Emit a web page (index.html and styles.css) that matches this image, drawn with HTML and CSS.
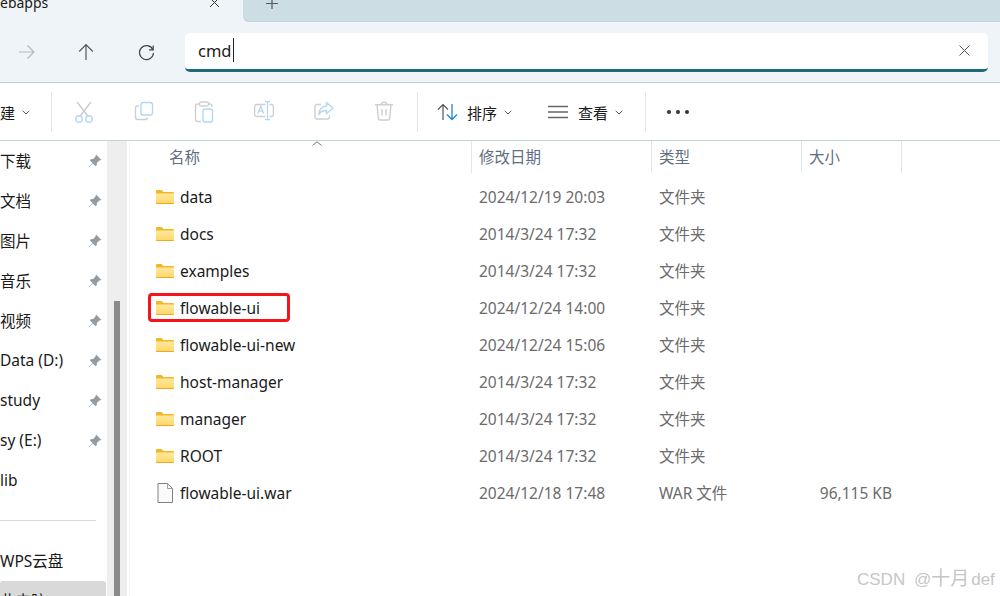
FILE: index.html
```html
<!DOCTYPE html>
<html lang="zh-CN">
<head>
<meta charset="UTF-8">
<meta name="viewport" content="width=device-width, initial-scale=1.0">
<title>webapps</title>
<link rel="stylesheet" href="styles.css">
</head>
<body>
  <svg class="defs" width="0" height="0">
    <defs>
      <linearGradient id="folder-front" x1="0" y1="0" x2="0" y2="1">
        <stop offset="0" stop-color="#ffe99f"/>
        <stop offset="1" stop-color="#ffd565"/>
      </linearGradient>
      <symbol id="folder" viewBox="0 0 18 14">
        <path d="M0 1.2C0 .5.5 0 1.2 0h4.3l2 2H17a1 1 0 0 1 1 1v2H0z" fill="#f5b625"/>
        <path d="M0 3.6h18V13a1 1 0 0 1-1 1H1a1 1 0 0 1-1-1z" fill="url(#folder-front)"/>
        <path d="M0 12.9h18V13a1 1 0 0 1-1 1H1a1 1 0 0 1-1-1z" fill="#eeaa1f"/>
      </symbol>
      <symbol id="pin" viewBox="0 0 14 14">
        <path d="M8.3.8 13.2 5.7 12.2 6.6 11.4 6.4 8.9 8.9 8.8 11.2 7.6 12.3 4.9 9.4 1.2 13 .9 12.7 4.5 9 1.7 6.3 2.8 5.2 5.1 5.1 7.6 2.6 7.4 1.8z" fill="#949ca3"/>
      </symbol>
      <symbol id="chevron" viewBox="0 0 8 5">
        <path d="M.7.8 4 4 7.3.8" fill="none" stroke="#555" stroke-width="1"/>
      </symbol>
    </defs>
  </svg>

  <div class="tabbar">
    <div class="tab">
      <span class="tab-title">ebapps</span>
      <svg class="tab-close" width="12" height="12" viewBox="0 0 12 12"><path d="M1 0 10 9M10 0 1 9" stroke="#333" stroke-width="1" fill="none"/></svg>
    </div>
    <div class="tab-strip">
      <svg width="14" height="14" viewBox="0 0 14 14"><path d="M7 0V9M1 3.500H13" stroke="#555" stroke-width="1.200" fill="none"/></svg>
    </div>
  </div>

  <div class="navbar">
    <div class="nav-btn">
      <svg width="18" height="16" viewBox="0 0 18 16"><path d="M1 8H16M9.500 1.500 16 8l-6.500 6.500" stroke="#b5b9bc" stroke-width="1.200" fill="none"/></svg>
    </div>
    <div class="nav-btn">
      <svg width="16" height="18" viewBox="0 0 16 18"><path d="M8 17V2M1.200 8.500 8 1.700l6.800 6.800" stroke="#555" stroke-width="1.200" fill="none"/></svg>
    </div>
    <div class="nav-btn">
      <svg width="17" height="17" viewBox="0 0 17 17"><path d="M14.800 5.500A7 7 0 1 0 15.500 9M15.200 1.500V5.800H11" stroke="#444" stroke-width="1.200" fill="none"/></svg>
    </div>
    <div class="address">
      <span class="address-text">cmd</span><span class="caret"></span>
      <svg class="address-clear" width="11" height="11" viewBox="0 0 11 11"><path d="M.5.5 10.500 10.500M10.500.5.500 10.500" stroke="#555" stroke-width="1" fill="none"/></svg>
    </div>
  </div>

  <div class="cmdbar">
    <div class="cmd cmd-new">建<svg class="chev" width="8" height="5"><use href="#chevron"/></svg></div>
    <div class="cmd-sep"></div>
    <div class="cmd-group">
      <div class="cmd-icon">
        <svg width="20" height="22" viewBox="0 0 20 22"><path d="M3 1 13.500 14.500M17 1 6.500 14.500" stroke="#c9c9c9" stroke-width="1.300" fill="none"/><circle cx="5" cy="18" r="3.300" stroke="#b3d7f5" stroke-width="1.400" fill="none"/><circle cx="15" cy="18" r="3.300" stroke="#b3d7f5" stroke-width="1.400" fill="none"/></svg>
      </div>
      <div class="cmd-icon">
        <svg width="20" height="20" viewBox="0 0 20 20"><path d="M5 5H3.500A2 2 0 0 0 1.500 7V16.500A2 2 0 0 0 3.500 18.500H11.500A2 2 0 0 0 13.500 16.500" stroke="#cfcfcf" stroke-width="1.400" fill="none"/><rect x="7" y="1.500" width="11.500" height="12.500" rx="2.200" stroke="#b3d7f5" stroke-width="1.400" fill="#fff"/></svg>
      </div>
      <div class="cmd-icon">
        <svg width="20" height="22" viewBox="0 0 20 22"><path d="M6 3H3.500A2 2 0 0 0 1.500 5V18.500A2 2 0 0 0 3.500 20.500H7M15 3H16.500A2 2 0 0 1 18 5V6" stroke="#cfcfcf" stroke-width="1.400" fill="none"/><rect x="5.500" y="1" width="9" height="4" rx="1.500" stroke="#cfcfcf" stroke-width="1.300" fill="#fff"/><rect x="9" y="8" width="9.500" height="13" rx="2" stroke="#b3d7f5" stroke-width="1.400" fill="#fff"/></svg>
      </div>
      <div class="cmd-icon">
        <svg width="20" height="20" viewBox="0 0 20 20"><path d="M11.500 3.500H2.500A2 2 0 0 0 .7 5.500V13.500A2 2 0 0 0 2.500 15.500H11.500M15.500 3.500H17.300A2 2 0 0 1 19.300 5.500V13.500A2 2 0 0 1 17.300 15.500H15.500" stroke="#cfcfcf" stroke-width="1.300" fill="none"/><path d="M3.800 12.500 6.800 5.500 9.800 12.500M4.800 10.200H8.800M11 .7H16M11 18.700H16M13.500 .7V18.700" stroke="#b3d7f5" stroke-width="1.300" fill="none"/></svg>
      </div>
      <div class="cmd-icon">
        <svg width="20" height="20" viewBox="0 0 20 20"><path d="M7 3.500H3A2 2 0 0 0 1 5.500V16A2 2 0 0 0 3 18H13.500A2 2 0 0 0 15.500 16V14.500" stroke="#cfcfcf" stroke-width="1.400" fill="none"/><path d="M12.500 1.500 19 7.200 12.500 12.500V9.500C9 9.500 6.500 10.500 5 13.500 5 9 7.500 5.500 12.500 5z" stroke="#b3d7f5" stroke-width="1.400" stroke-linejoin="round" fill="none"/></svg>
      </div>
      <div class="cmd-icon">
        <svg width="20" height="20" viewBox="0 0 20 20"><path d="M1 3.700H19M7 3.500C7 .5 13 .5 13 3.500M3 3.700 4.300 17A2 2 0 0 0 6.300 19H13.700A2 2 0 0 0 15.700 17L17 3.700M8 8V14.500M12 8V14.500" stroke="#cfcfcf" stroke-width="1.400" fill="none"/></svg>
      </div>
    </div>
    <div class="cmd-sep"></div>
    <div class="cmd cmd-sort">
      <svg width="21" height="18" viewBox="0 0 21 18"><path d="M6 17V1.500M1 6.500 6 1.500 11 6.500" stroke="#555" stroke-width="1.200" fill="none"/><path d="M15 1V16.500M10 11.500 15 16.500 20 11.500" stroke="#1b86d8" stroke-width="1.300" fill="none"/></svg>
      <span>排序</span>
      <svg class="chev" width="8" height="5"><use href="#chevron"/></svg>
    </div>
    <div class="cmd cmd-view">
      <svg width="20" height="14" viewBox="0 0 20 14"><path d="M0 1.500H20M0 7H20M0 12.500H20" stroke="#666" stroke-width="1.500" fill="none"/></svg>
      <span>查看</span>
      <svg class="chev" width="8" height="5"><use href="#chevron"/></svg>
    </div>
    <div class="cmd-sep"></div>
    <div class="cmd-more"><i></i><i></i><i></i></div>
  </div>

  <div class="main">
    <nav class="sidebar">
      <div class="side-item"><span>下载</span><svg class="pin" width="14" height="14"><use href="#pin"/></svg></div>
      <div class="side-item"><span>文档</span><svg class="pin" width="14" height="14"><use href="#pin"/></svg></div>
      <div class="side-item"><span>图片</span><svg class="pin" width="14" height="14"><use href="#pin"/></svg></div>
      <div class="side-item"><span>音乐</span><svg class="pin" width="14" height="14"><use href="#pin"/></svg></div>
      <div class="side-item"><span>视频</span><svg class="pin" width="14" height="14"><use href="#pin"/></svg></div>
      <div class="side-item"><span>Data (D:)</span><svg class="pin" width="14" height="14"><use href="#pin"/></svg></div>
      <div class="side-item"><span>study</span><svg class="pin" width="14" height="14"><use href="#pin"/></svg></div>
      <div class="side-item"><span>sy (E:)</span><svg class="pin" width="14" height="14"><use href="#pin"/></svg></div>
      <div class="side-item"><span>lib</span></div>
      <div class="side-divider"></div>
      <div class="side-item"><span>WPS云盘</span></div>
      <div class="side-item selected"><span>此电脑</span></div>
    </nav>
    <div class="scroll-track"><div class="scroll-thumb"></div></div>

    <section class="files">
      <div class="file-head">
        <div class="col-name head-cell">名称
          <svg class="sort-caret" width="10" height="5" viewBox="0 0 10 5"><path d="M.5 4.500 5 .7 9.500 4.500" stroke="#777" stroke-width="1" fill="none"/></svg>
        </div>
        <div class="head-cell">修改日期</div>
        <div class="head-cell">类型</div>
        <div class="head-cell">大小</div>
      </div>

      <div class="file-row"><div class="col-name"><svg class="folder" width="18" height="14"><use href="#folder"/></svg>data</div><div class="cell">2024/12/19 20:03</div><div class="cell">文件夹</div><div class="cell"></div></div>
      <div class="file-row"><div class="col-name"><svg class="folder" width="18" height="14"><use href="#folder"/></svg>docs</div><div class="cell">2014/3/24 17:32</div><div class="cell">文件夹</div><div class="cell"></div></div>
      <div class="file-row"><div class="col-name"><svg class="folder" width="18" height="14"><use href="#folder"/></svg>examples</div><div class="cell">2014/3/24 17:32</div><div class="cell">文件夹</div><div class="cell"></div></div>
      <div class="file-row"><div class="col-name"><svg class="folder" width="18" height="14"><use href="#folder"/></svg>flowable-ui</div><div class="cell">2024/12/24 14:00</div><div class="cell">文件夹</div><div class="cell"></div></div>
      <div class="file-row"><div class="col-name"><svg class="folder" width="18" height="14"><use href="#folder"/></svg>flowable-ui-new</div><div class="cell">2024/12/24 15:06</div><div class="cell">文件夹</div><div class="cell"></div></div>
      <div class="file-row"><div class="col-name"><svg class="folder" width="18" height="14"><use href="#folder"/></svg>host-manager</div><div class="cell">2014/3/24 17:32</div><div class="cell">文件夹</div><div class="cell"></div></div>
      <div class="file-row"><div class="col-name"><svg class="folder" width="18" height="14"><use href="#folder"/></svg>manager</div><div class="cell">2014/3/24 17:32</div><div class="cell">文件夹</div><div class="cell"></div></div>
      <div class="file-row"><div class="col-name"><svg class="folder" width="18" height="14"><use href="#folder"/></svg>ROOT</div><div class="cell">2014/3/24 17:32</div><div class="cell">文件夹</div><div class="cell"></div></div>
      <div class="file-row"><div class="col-name"><svg class="folder" width="18" height="20" viewBox="0 0 18 20"><path d="M2 .5H11.500L16.500 5.500V19.500H2z" fill="#fafafa" stroke="#808080" stroke-width="1"/><path d="M11.500 .5V5.500H16.500" fill="none" stroke="#a0a0a0" stroke-width="1"/></svg>flowable-ui.war</div><div class="cell">2024/12/18 17:48</div><div class="cell">WAR 文件</div><div class="cell cell-size">96,115 KB</div></div>

      <div class="highlight"></div>
    </section>
  </div>

  <div class="watermark">CSDN @<span>十月</span>def</div>
</body>
</html>
```

FILE: styles.css
```css
html, body {
  margin: 0;
  height: 100%;
}
body {
  position: relative;
  width: 1000px;
  height: 596px;
  overflow: hidden;
  display: flex;
  flex-direction: column;
  background-color: #fff;
  color: #1a1a1a;
  font-family: "Noto Sans", "Noto Sans CJK SC", sans-serif;
  font-size: 15.500px;
}
.defs {
  position: absolute;
}

/* tabs */
.tabbar {
  height: 22px;
  display: flex;
  background-color: #eff4f8;
  flex-shrink: 0;
}
.tab {
  width: 243px;
  display: flex;
  justify-content: space-between;
  padding-right: 22px;
  box-sizing: border-box;
}
.tab-title {
  margin-top: -7px;
  line-height: 20px;
  font-size: 14px;
}
.tab-close {
  margin-top: -2px;
}
.tab-strip {
  flex: 1;
  background-color: #cddde4;
  border-bottom: 1px solid #c3d3da;
  border-bottom-left-radius: 6px;
  padding-left: 22px;
  line-height: 0;
}

/* back / up / refresh + address box */
.navbar {
  height: 60px;
  display: flex;
  align-items: center;
  background-color: #eff4f8;
  border-bottom: 1px solid #bfd0d8;
  flex-shrink: 0;
}
.nav-btn {
  width: 60px;
  display: flex;
  justify-content: center;
}
.nav-btn:first-child {
  width: 59px;
  margin-left: -3px;
}
.address {
  width: 803px;
  height: 39px;
  margin-left: 9px;
  box-sizing: border-box;
  display: flex;
  align-items: center;
  padding: 0 18px 1px 13px;
  background-color: #fff;
  border-bottom: 3px solid #1d6a79;
  border-radius: 5px;
  font-size: 16.500px;
}
.caret {
  width: 1px;
  height: 24px;
  background-color: #222;
  margin-left: 1px;
}
.address-clear {
  margin-left: auto;
}

/* command bar */
.cmdbar {
  height: 56px;
  padding-top: 1px;
  display: flex;
  align-items: center;
  border-bottom: 1px solid #c3d3da;
  flex-shrink: 0;
  font-size: 15px;
}
.cmd {
  display: flex;
  align-items: center;
}
.chev {
  flex-shrink: 0;
}
.cmd-new {
  width: 51px;
}
.cmd-new .chev {
  margin-left: 7px;
}
.cmd-sep {
  width: 1px;
  height: 40px;
  background-color: #e6e6e6;
}
.cmd-group {
  display: flex;
  padding-left: 2px;
  width: 365px;
  box-sizing: border-box;
}
.cmd-icon {
  width: 60px;
  display: flex;
  justify-content: center;
}
.cmd-sort {
  width: 112px;
  padding-left: 19px;
  box-sizing: border-box;
}
.cmd-sort span {
  margin: 0 7px 0 9px;
}
.cmd-view {
  width: 115px;
  padding-left: 19px;
  box-sizing: border-box;
}
.cmd-view svg:first-child {
  margin-left: -1px;
}
.cmd-view span {
  margin: 0 7px 0 10px;
}
.cmd-more {
  display: flex;
  gap: 5px;
  margin-left: 21px;
}
.cmd-more i {
  width: 4px;
  height: 4px;
  border-radius: 50%;
  background-color: #333;
}

/* left side */
.main {
  flex: 1;
  display: flex;
  min-height: 0;
}
.sidebar {
  width: 107px;
  flex-shrink: 0;
}
.side-item {
  height: 40px;
  display: flex;
  align-items: center;
  justify-content: space-between;
  padding-right: 4px;
  box-sizing: border-box;
  width: 106px;
}
.side-item span {
  padding-bottom: 2px;
}
.side-item.selected {
  background-color: #d9d9d9;
  border-radius: 3px;
}
.side-divider {
  height: 20px;
  width: 96px;
  box-sizing: border-box;
  border-bottom: 1px solid #d9d9d9;
  margin-bottom: 20px;
}
.scroll-track {
  width: 20px;
  flex-shrink: 0;
  background-color: #eee;
  padding: 160px 7px 0;
  box-sizing: border-box;
}
.scroll-thumb {
  height: 100%;
  background-color: #8a8a8a;
}

/* file list */
.files {
  position: relative;
  flex: 1;
  margin-left: 2px;
  border-left: 1px solid #f3f3f3;
}
.file-head {
  display: grid;
  grid-template-columns: 342px 180px 150px 100px;
  height: 32px;
  margin-bottom: 6px;
  color: #5f6f82;
}
.head-cell {
  position: relative;
  display: flex;
  align-items: center;
  padding: 0 0 2px 7px;
  border-right: 1px solid #e3e6e8;
}
.head-cell.col-name {
  padding-left: 39px;
}
.sort-caret {
  position: absolute;
  left: 182px;
  top: 0;
}
.file-row {
  display: grid;
  grid-template-columns: 342px 180px 150px 100px;
  height: 37px;
  align-items: center;
}
.file-row > div {
  padding-bottom: 2px;
}
.col-name {
  display: flex;
  align-items: center;
}
.file-row .col-name {
  padding-left: 26px;
}
.folder {
  margin-right: 6px;
}
.cell {
  padding-left: 7px;
  color: #6b6b6b;
}
.cell-size {
  padding: 0 10px 2px 0;
  text-align: right;
}
.highlight {
  position: absolute;
  left: 18px;
  top: 152px;
  width: 136px;
  height: 23px;
  border: 3px solid #f5141a;
  border-radius: 4px;
}
.watermark {
  position: absolute;
  left: 857px;
  top: 563px;
  white-space: nowrap;
  word-spacing: 4px;
  font-family: "Liberation Sans", "Noto Sans CJK SC", sans-serif;
  font-size: 17px;
  color: #c6c6c6;
}
.watermark span {
  font-size: 19px;
  margin-right: 2px;
}
```
